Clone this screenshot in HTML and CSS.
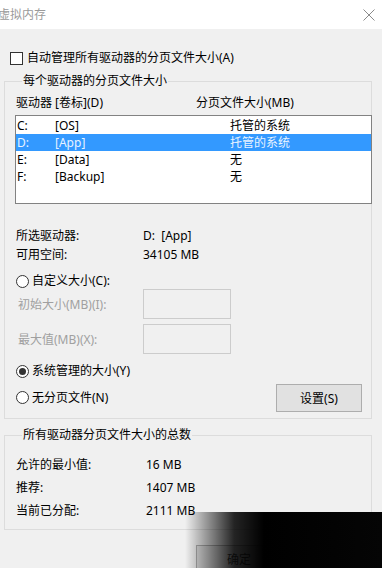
FILE: index.html
```html
<!DOCTYPE html>
<html>
<head lang="zh-CN">
  <meta charset="UTF-8">
  <title>虚拟内存</title>
  <link rel="stylesheet" href="styles.css">
</head>
<body>
<div class="dialog">
  <div class="title-bar">
    <span class="title-text">虚拟内存</span>
    <svg class="close-btn" width="12" height="12" viewBox="0 0 12 12">
      <path d="M0.5 0.5 L11.5 11.5 M11.5 0.5 L0.5 11.5" stroke="#8a8a8a" stroke-width="1" fill="none"/>
    </svg>
  </div>
  <div class="dialog-body">
    <div class="auto-row">
      <span class="check-box"></span>
      <span>自动管理所有驱动器的分页文件大小(A)</span>
    </div>

    <fieldset class="group group-drives">
      <legend>每个驱动器的分页文件大小</legend>
      <div class="list-head">
        <span>驱动器 [卷标](D)</span>
        <span>分页文件大小(MB)</span>
      </div>
      <div class="drive-list">
        <div class="drive-row"><span>C:</span><span>[OS]</span><span>托管的系统</span></div>
        <div class="drive-row selected"><span>D:</span><span>[App]</span><span>托管的系统</span></div>
        <div class="drive-row"><span>E:</span><span>[Data]</span><span>无</span></div>
        <div class="drive-row"><span>F:</span><span>[Backup]</span><span>无</span></div>
      </div>
      <div class="info-grid">
        <span>所选驱动器:</span><span>D:&nbsp;&nbsp;[App]</span>
        <span>可用空间:</span><span>34105 MB</span>
      </div>
      <div class="radio-row first-radio"><span class="radio"></span><span>自定义大小(C):</span></div>
      <div class="size-row first-size">
        <label>初始大小(MB)(I):</label>
        <div class="size-input"></div>
      </div>
      <div class="size-row">
        <label>最大值(MB)(X):</label>
        <div class="size-input"></div>
      </div>
      <div class="radio-row sys-radio"><span class="radio checked"></span><span>系统管理的大小(Y)</span></div>
      <div class="last-row">
        <div class="radio-row"><span class="radio"></span><span>无分页文件(N)</span></div>
        <div class="btn set-btn">设置(S)</div>
      </div>
    </fieldset>

    <fieldset class="group group-total">
      <legend>所有驱动器分页文件大小的总数</legend>
      <div class="total-grid">
        <span>允许的最小值:</span><span>16 MB</span>
        <span>推荐:</span><span>1407 MB</span>
        <span>当前已分配:</span><span>2111 MB</span>
      </div>
    </fieldset>

    <div class="bottom-row">
      <div class="btn ok-btn">确定</div>
    </div>
  </div>
  <div class="dark-corner"></div>
</div>
</body>
</html>
```

FILE: styles.css
```css
html, body {
  margin: 0;
  padding: 0;
}

body {
  width: 382px;
  height: 568px;
  overflow: hidden;
  background: #f0f0f0;
  font-family: "Noto Sans", "Noto Sans CJK SC", sans-serif;
  font-size: 12px;
  color: #000000;
}

.dialog {
  position: relative;
  width: 382px;
  height: 568px;
  overflow: hidden;
}

.title-bar {
  height: 29px;
  background: #ffffff;
  display: flex;
  align-items: center;
  justify-content: space-between;
  padding-right: 7px;
}

.title-text {
  margin-left: -2px;
  color: #9a9a9a;
  font-size: 12px;
  line-height: 14px;
}

.dialog-body {
  padding: 0 10px 0 4px;
}

.auto-row {
  margin-top: 22px;
  height: 14px;
  line-height: 14px;
  display: flex;
  align-items: center;
  padding-left: 6px;
}

.check-box {
  width: 11px;
  height: 11px;
  border: 1px solid #333333;
  background: #ffffff;
  margin-right: 4px;
}

.group {
  margin: 0;
  border: 1px solid #dcdcdc;
  padding: 0 0 0 11px;
}

.group legend {
  padding: 0 1px;
  margin-left: 6px;
  line-height: 14px;
  height: 14px;
}

.group-drives {
  margin-top: 9px;
  padding-bottom: 7px;
}

.list-head {
  margin-top: 8px;
  height: 14px;
  line-height: 14px;
  display: grid;
  grid-template-columns: 180px auto;
}

.drive-list {
  margin-top: 5px;
  margin-left: -1px;
  margin-right: -1px;
  height: 87px;
  border: 1px solid #828282;
  background: #ffffff;
  padding-top: 1px;
  box-sizing: border-box;
  height: 89px;
}

.drive-row {
  height: 17px;
  line-height: 17px;
  display: grid;
  grid-template-columns: 38px 175px auto;
  padding-left: 1px;
}

.drive-row.selected {
  background: #3399ff;
  color: #e8f3ff;
}

.info-grid {
  margin-top: 22px;
  display: grid;
  grid-template-columns: 127px auto;
  line-height: 19px;
}

.radio-row {
  display: flex;
  align-items: center;
  height: 14px;
  line-height: 14px;
}

.radio {
  position: relative;
  width: 11px;
  height: 11px;
  border: 1px solid #333333;
  border-radius: 50%;
  background: #ffffff;
  margin-right: 3px;
}

.radio.checked::after {
  content: "";
  position: absolute;
  left: 2px;
  top: 2px;
  width: 7px;
  height: 7px;
  border-radius: 50%;
  background: #333333;
}

.first-radio {
  margin-top: 10px;
}

.size-row {
  display: flex;
  align-items: center;
  margin-top: 5px;
}

.size-row.first-size {
  margin-top: 1px;
}

.size-row label {
  width: 125px;
  padding-left: 2px;
  color: #a0a0a0;
}

.size-input {
  width: 86px;
  height: 28px;
  border: 1px solid #cccccc;
  background: #f0f0f0;
}

.sys-radio {
  margin-top: 10px;
}

.last-row {
  margin-top: 6px;
  height: 27px;
  display: flex;
  align-items: center;
  justify-content: space-between;
  padding-right: 9px;
}

.btn {
  box-sizing: border-box;
  width: 86px;
  height: 28px;
  border: 1px solid #adadad;
  background: #e1e1e1;
  display: flex;
  align-items: center;
  justify-content: center;
}

.group-total {
  margin-top: 9px;
  padding-bottom: 7px;
}

.total-grid {
  margin-top: 11px;
  display: grid;
  grid-template-columns: 130px auto;
  line-height: 23px;
}

.bottom-row {
  margin-top: 15px;
  padding-left: 192px;
}

.ok-btn {
  color: #444444;
}

.dark-corner {
  position: absolute;
  left: 185px;
  top: 512px;
  width: 197px;
  height: 56px;
  background: linear-gradient(to right, rgba(0, 0, 0, 0) 0%, rgba(0, 0, 0, 0.85) 25%, #000000 40%, #050505 100%);
}
```
